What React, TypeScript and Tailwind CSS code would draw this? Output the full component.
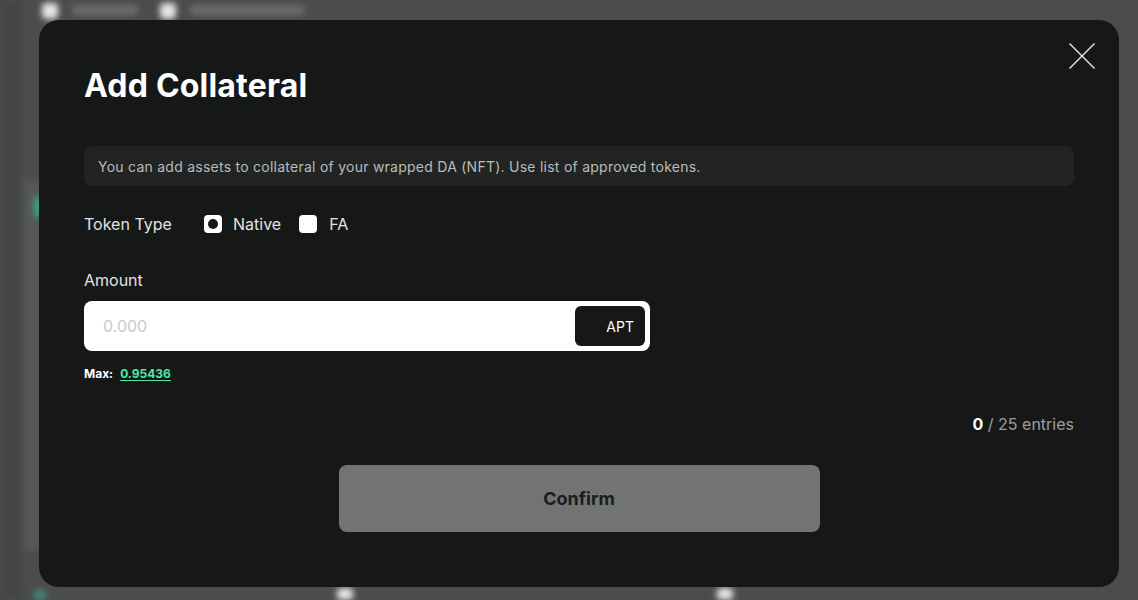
const font = { fontFamily: "Inter, 'Noto Sans', sans-serif" };

export default function App() {
  return (
    <div
      className="relative h-[600px] w-[1138px] overflow-hidden bg-[#4b4d4c]"
      style={font}
    >
      {/* Blurred page behind the dialog */}
      <div className="pointer-events-none absolute inset-0 blur-[3px]">
        <div className="absolute left-0 top-0 h-full w-[22px] bg-[#444645]" />
        <div className="absolute left-[22px] top-[180px] h-[370px] w-[18px] bg-[#555756]" />
        <div className="absolute left-[42px] top-[3px] h-[16px] w-[16px] rounded bg-[#e6e6e6]" />
        <div className="absolute left-[72px] top-[5px] h-[10px] w-[66px] rounded bg-[#6a6c6b]" />
        <div className="absolute left-[160px] top-[3px] h-[16px] w-[16px] rounded bg-[#e6e6e6]" />
        <div className="absolute left-[190px] top-[5px] h-[10px] w-[115px] rounded bg-[#6a6c6b]" />
        <div className="absolute left-[34px] top-[196px] h-[22px] w-[8px] rounded bg-[#3fa58a]" />
        <div className="absolute left-[34px] top-[590px] h-[10px] w-[12px] rounded bg-[#3f8a78]" />
        <div className="absolute left-[337px] top-[588px] h-[12px] w-[16px] rounded bg-[#e6e6e6]" />
        <div className="absolute left-[717px] top-[588px] h-[12px] w-[16px] rounded bg-[#e6e6e6]" />
      </div>

      {/* Dialog */}
      <div className="absolute inset-0 flex pl-[39px] pt-[20px]">
        <div className="relative flex h-[567px] w-[1080px] flex-col rounded-[20px] bg-[#161817] px-[45px] pt-[46px]">
          <button
            type="button"
            className="absolute right-[24px] top-[23px] flex h-[26px] w-[26px] items-center justify-center text-[#e8e8e8]"
          >
            <svg width="26" height="26" viewBox="0 0 26 26" fill="none" stroke="currentColor" strokeWidth="1.4">
              <path d="M0.5 0.5L25.5 25.5M25.5 0.5L0.5 25.5" />
            </svg>
          </button>

          <h1 className="text-[32px] font-bold leading-[40px] tracking-[0.2px] text-white">
            Add Collateral
          </h1>

          <div className="mt-[40px] flex h-[40px] items-center rounded-[8px] bg-[#222423] px-[14px] text-[14px] tracking-[0.25px] text-[#b8bcbb]">
            You can add assets to collateral of your wrapped DA (NFT). Use list of approved tokens.
          </div>

          <div className="mt-[26px] flex items-center text-[16px] text-[#e2e2e2]">
            <span className="w-[120px]">Token Type</span>
            <span className="flex h-[18px] w-[18px] items-center justify-center rounded-[4px] bg-white">
              <span className="h-[10px] w-[10px] rounded-full bg-[#161817]" />
            </span>
            <span className="ml-[11px]">Native</span>
            <span className="ml-[18px] h-[18px] w-[18px] rounded-[4px] bg-white" />
            <span className="ml-[12px]">FA</span>
          </div>

          <label className="mt-[34px] text-[16px] leading-[20px] text-[#e2e2e2]">Amount</label>

          <div className="mt-[11px] flex h-[50px] w-[566px] items-center rounded-[8px] bg-white pl-[19px] pr-[5px]">
            <span className="flex-1 text-[16px] text-[#c3ccd0]">0.000</span>
            <button
              type="button"
              className="flex h-[40px] w-[70px] items-center justify-end rounded-[6px] bg-[#161817] pr-[11px] text-[14px] text-white"
            >
              APT
            </button>
          </div>

          <div className="mt-[16px] flex items-center gap-[7px] text-[12px] font-bold leading-[14px]">
            <span className="text-white">Max:</span>
            <span className="text-[#4ee6a9] underline underline-offset-2">0.95436</span>
          </div>

          <div className="mt-[33px] text-right text-[16px] leading-[20px] text-[#9c9e9d]">
            <span className="font-bold text-white">0</span> / 25 entries
          </div>

          <div className="mt-[31px] flex justify-center">
            <button
              type="button"
              className="flex h-[67px] w-[481px] items-center justify-center rounded-[8px] bg-[#727473] text-[18px] font-bold text-[#1b1c1c]"
            >
              Confirm
            </button>
          </div>
        </div>
      </div>
    </div>
  );
}
